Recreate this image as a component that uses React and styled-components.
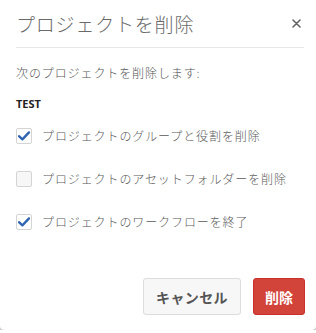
import React, { useState } from 'react'
import styled, { createGlobalStyle } from 'styled-components';

const GlobalStyle = createGlobalStyle`
  html, body {
    margin: 0;
    padding: 0;
    background: #fff;
  }
  body {
    font-family: "Open Sans", "Noto Sans CJK JP", sans-serif;
  }
`;

const Dialog = styled.div`
  width: 316px;
  height: 330px;
  box-sizing: border-box;
  background: #fff;
  border-radius: 0 0 4px 4px;
  box-shadow: 0 1px 2px rgba(0, 0, 0, 0.45);
  display: flex;
  flex-direction: column;
`;

const Header = styled.div`
  margin: 0 12px 0 16px;
  height: 48px;
  box-sizing: border-box;
  border-bottom: 1px solid #e8e8e8;
  display: flex;
  flex-direction: row;
  justify-content: space-between;
  align-items: center;
`;

const Title = styled.h1`
  margin: 0;
  font-size: 19px;
  font-weight: 300;
  color: #6a6a6a;
  letter-spacing: 0.8px;
  font-family: "Noto Sans CJK JP", sans-serif;
`;

const CloseButton = styled.button`
  border: none;
  background: none;
  padding: 0;
  margin-right: 2px;
  width: 12px;
  height: 12px;
  cursor: pointer;
  display: flex;
  align-items: center;
  justify-content: center;
`;

const Body = styled.div`
  padding: 0 16px;
  display: flex;
  flex-direction: column;
  flex: 1;
`;

const Intro = styled.p`
  margin: 16px 0 0;
  font-size: 12px;
  font-weight: 300;
  color: #555;
  letter-spacing: 0.9px;
  font-family: "Noto Sans CJK JP", sans-serif;
`;

const ProjectName = styled.div`
  margin-top: 15px;
  font-size: 11px;
  font-weight: bold;
  color: #222;
  font-family: "Open Sans", sans-serif;
`;

const OptionList = styled.div`
  display: flex;
  flex-direction: column;
  gap: 26px;
  margin-top: 16px;
`;

const Option = styled.label`
  display: flex;
  flex-direction: row;
  align-items: center;
  gap: 10px;
  font-size: 12px;
  font-weight: 300;
  color: #5a5a5a;
  letter-spacing: 0.9px;
  cursor: pointer;
  font-family: "Noto Sans CJK JP", sans-serif;
`;

const Box = styled.span`
  width: 16px;
  height: 16px;
  box-sizing: border-box;
  border: 1px solid #d4d4d4;
  border-radius: 2px;
  background: ${(props) => (props.checked ? "#fff" : "#f7f7f7")};
  display: flex;
  align-items: center;
  justify-content: center;
  flex-shrink: 0;
`;

const Footer = styled.div`
  display: flex;
  flex-direction: row;
  justify-content: flex-end;
  gap: 12px;
  padding: 0 11px 15px 0;
`;

const Button = styled.button`
  height: 37px;
  padding: 0 ${(props) => (props.danger ? "11px" : "12px")};
  border-radius: 3px;
  font-size: 14px;
  font-weight: bold;
  font-family: "Noto Sans CJK JP", sans-serif;
  cursor: pointer;
  border: 1px solid ${(props) => (props.danger ? "#c9302c" : "#dcdcdc")};
  background: ${(props) => (props.danger ? "#d2433a" : "#f7f7f7")};
  color: ${(props) => (props.danger ? "#fff" : "#555")};
  letter-spacing: ${(props) => (props.danger ? "0" : "0.4px")};
`;

const Check = () => (
  <svg width="12" height="10" viewBox="0 0 12 10">
    <path d="M1 5.2 L4.4 8.4 L11 1.4" fill="none" stroke="#2f64b4" strokeWidth="2.3" strokeLinecap="round" strokeLinejoin="round" />
  </svg>
);

const options = [
  { label: "プロジェクトのグループと役割を削除", checked: true },
  { label: "プロジェクトのアセットフォルダーを削除", checked: false },
  { label: "プロジェクトのワークフローを終了", checked: true },
];

const App = () => {
  const [checks, setChecks] = useState(options.map((o) => o.checked));

  const toggle = (i) => {
    setChecks(checks.map((c, j) => (j === i ? !c : c)));
  };

  return (
    <>
      <GlobalStyle />
      <Dialog>
        <Header>
          <Title>プロジェクトを削除</Title>
          <CloseButton aria-label="close">
            <svg width="9" height="9" viewBox="0 0 9 9">
              <path d="M1 1 L8 8 M8 1 L1 8" stroke="#666" strokeWidth="1.6" strokeLinecap="round" />
            </svg>
          </CloseButton>
        </Header>
        <Body>
          <Intro>次のプロジェクトを削除します:</Intro>
          <ProjectName>TEST</ProjectName>
          <OptionList>
            {options.map((o, i) => (
              <Option key={o.label} onClick={() => toggle(i)}>
                <Box checked={checks[i]}>{checks[i] && <Check />}</Box>
                {o.label}
              </Option>
            ))}
          </OptionList>
        </Body>
        <Footer>
          <Button>キャンセル</Button>
          <Button danger>削除</Button>
        </Footer>
      </Dialog>
    </>
  )
}

export default App;
